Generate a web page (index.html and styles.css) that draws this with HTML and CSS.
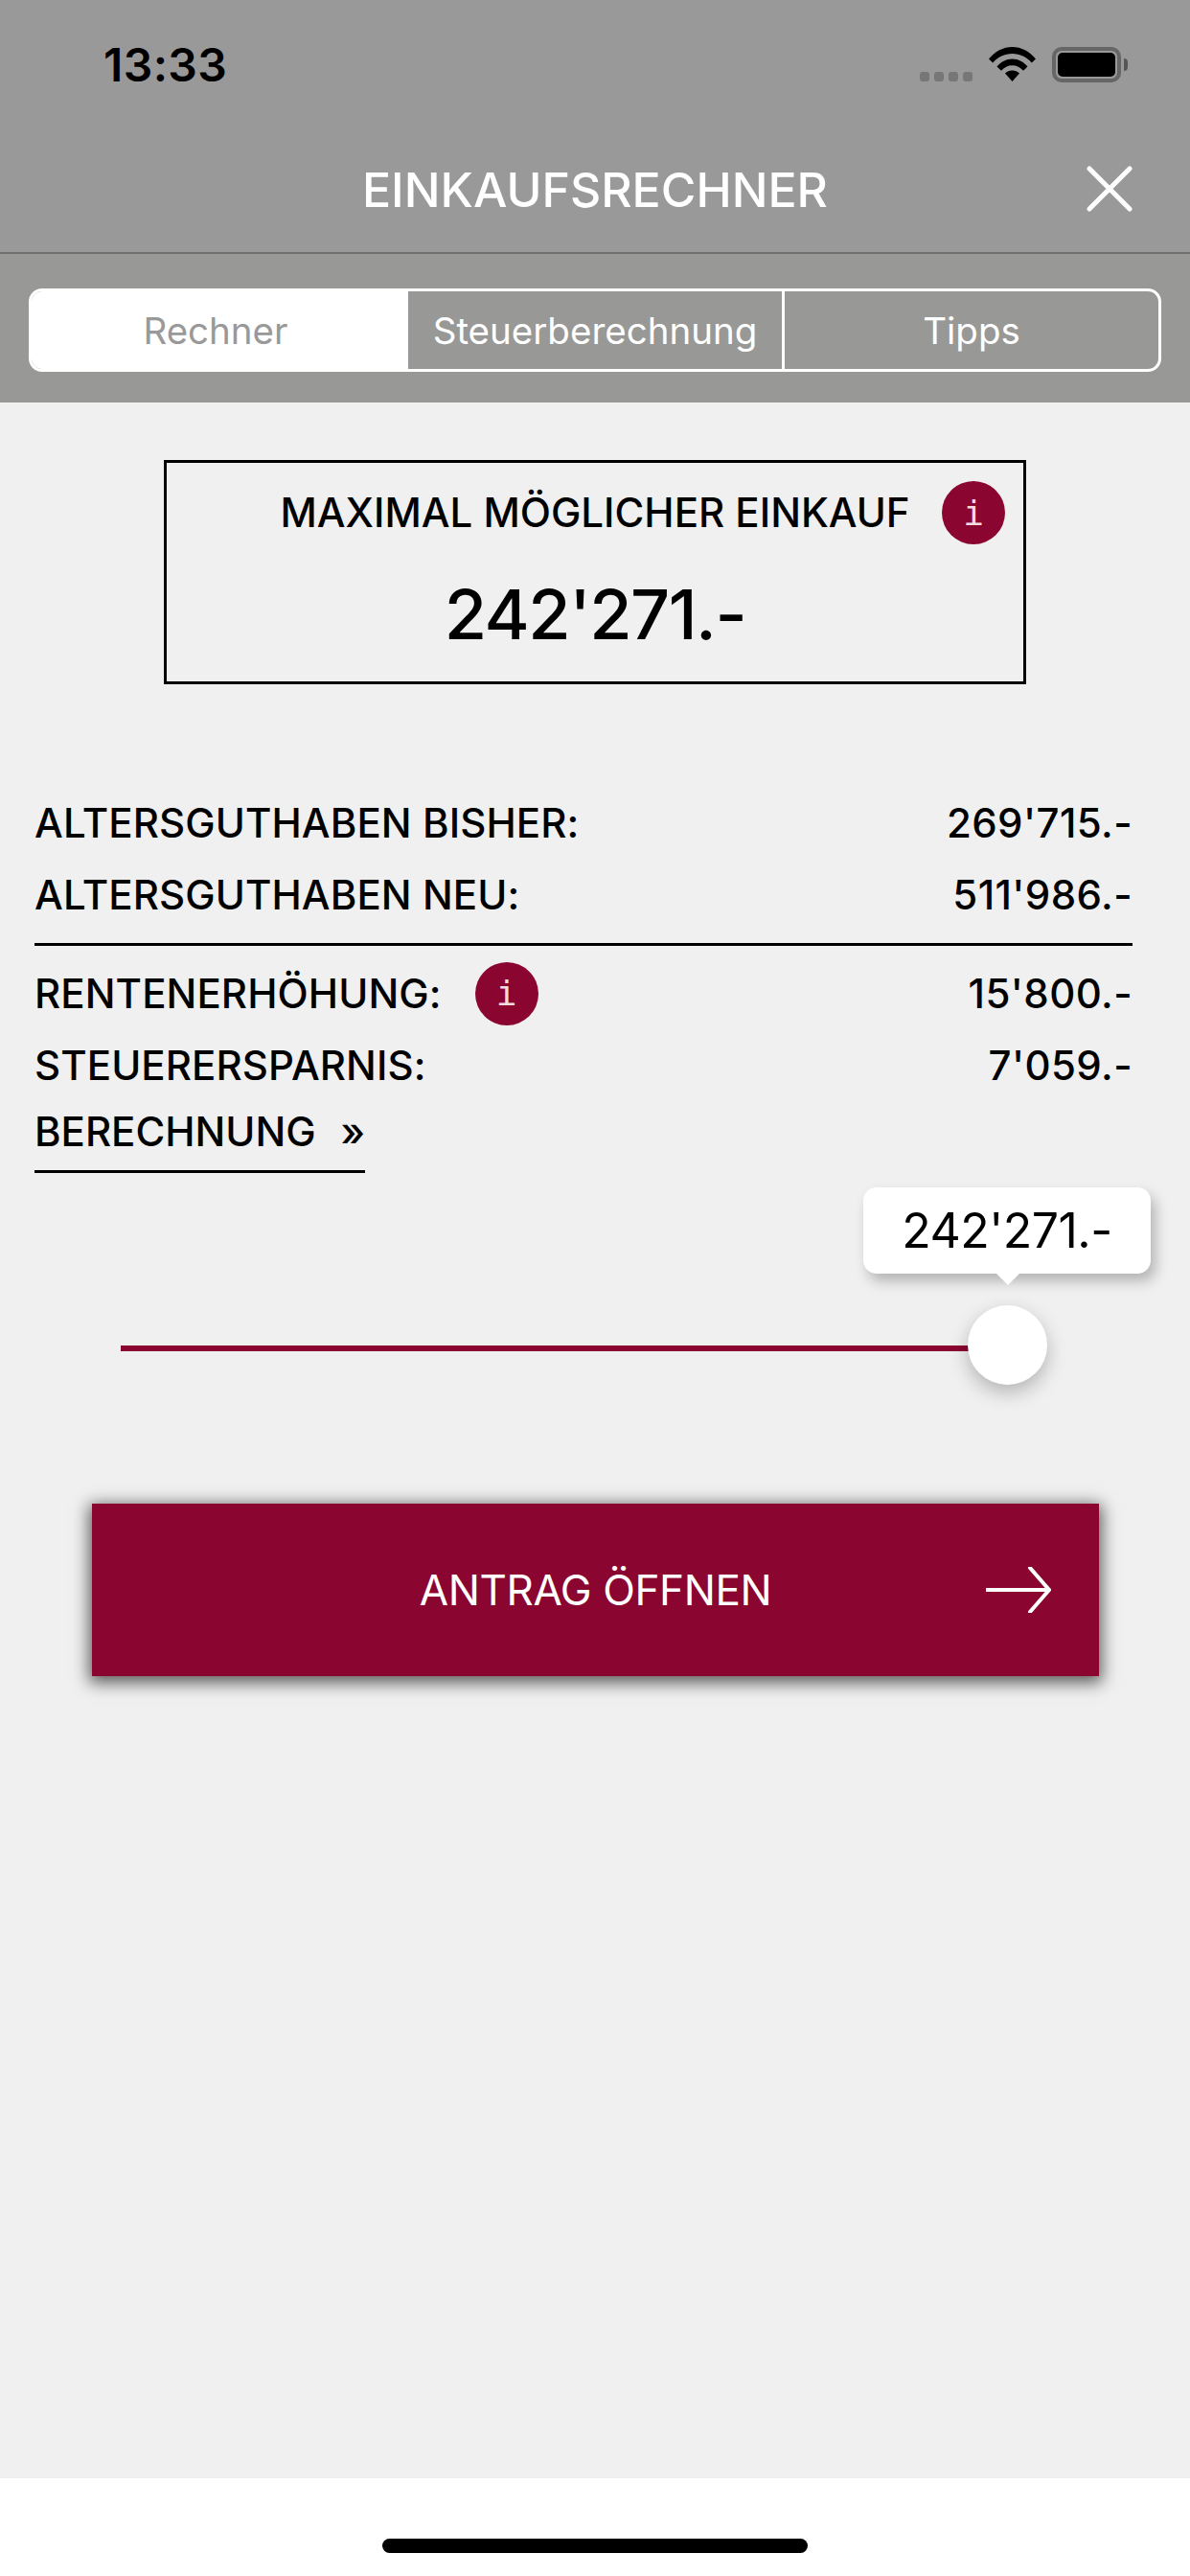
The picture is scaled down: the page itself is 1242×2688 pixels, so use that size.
FILE: index.html
```html
<!DOCTYPE html>
<html lang="de">
<head>
<meta charset="utf-8">
<title>Einkaufsrechner</title>
<link rel="stylesheet" href="styles.css">
</head>
<body>
<div class="screen">
  <header class="top">
    <div class="status">
      <span class="time">13:33</span>
      <div class="status-icons">
        <div class="signal"><i></i><i></i><i></i><i></i></div>
        <svg class="wifi" width="49" height="36" viewBox="0 0 49 36"><path d="M0 12.500C6.500 4.700 15 0 24.500 0S42.500 4.700 49 12.500L44.800 16.500C39.500 10.500 32.500 7 24.500 7S9.500 10.500 4.200 16.500Z"/><path d="M8.500 20.500C12.500 15.500 18.200 12.500 24.500 12.500S36.500 15.500 40.500 20.500L36 24.800C33 21.200 29 19.200 24.500 19.200S16 21.200 13 24.800Z"/><path d="M17 27.500C19 25.500 21.500 24.400 24.500 24.400S30 25.500 32 27.500L24.500 36Z"/></svg>
        <div class="battery"><div class="battery-fill"></div></div>
        <div class="battery-nub"></div>
      </div>
    </div>
    <div class="nav">
      <h1 class="nav-title">EINKAUFSRECHNER</h1>
      <svg class="close" width="48" height="48" viewBox="0 0 48 48"><path d="M3 3L45 45M45 3L3 45"/></svg>
    </div>
  </header>
  <div class="tabbar">
    <div class="tabs">
      <div class="tab tab-active">Rechner</div>
      <div class="tab">Steuerberechnung</div>
      <div class="tab">Tipps</div>
    </div>
  </div>
  <main class="content">
    <section class="maxbox">
      <div class="maxbox-title">MAXIMAL MÖGLICHER EINKAUF</div>
      <span class="info info-box">i</span>
      <div class="maxbox-value">242'271.-</div>
    </section>
    <section class="rows">
      <div class="row"><span>ALTERSGUTHABEN BISHER:</span><span class="amount">269'715.-</span></div>
      <div class="row row-2"><span>ALTERSGUTHABEN NEU:</span><span class="amount">511'986.-</span></div>
      <div class="row row-3"><span class="label-info">RENTENERHÖHUNG:<span class="info">i</span></span><span class="amount">15'800.-</span></div>
      <div class="row row-4"><span>STEUERERSPARNIS:</span><span class="amount">7'059.-</span></div>
      <div class="calc-link"><span>BERECHNUNG</span><span>»</span></div>
    </section>
    <section class="slider">
      <div class="track"></div>
      <div class="thumb"></div>
      <div class="bubble">242'271.-</div>
    </section>
    <button class="cta">
      <span>ANTRAG ÖFFNEN</span>
      <svg class="cta-arrow" width="68" height="48" viewBox="0 0 68 48"><path d="M0 24H66M46 1L66 24L46 47"/></svg>
    </button>
  </main>
  <footer class="home"><div class="home-bar"></div></footer>
</div>
</body>
</html>
```
FILE: styles.css
```css
* { box-sizing: border-box; }
html, body { margin: 0; padding: 0; }
body { font-family: Inter, "Liberation Sans", sans-serif; color: #000; background: #fff; }
.screen { width: 1242px; height: 2688px; display: flex; flex-direction: column; overflow: hidden; }

.top { background: #999999; height: 265px; border-bottom: 2px solid #6f6f6f; flex: none; }
.status { height: 132px; display: flex; justify-content: space-between; align-items: flex-start; padding: 42px 65px 0 108px; }
.time { font-size: 48px; line-height: 52px; font-weight: 600; letter-spacing: 0.4px; }
.status-icons { display: flex; align-items: flex-start; padding-top: 7px; }
.signal { display: flex; gap: 5px; margin: 26px 17px 0 0; }
.signal i { display: block; width: 10px; height: 10px; border-radius: 3px; background: #777; }
.wifi { fill: #000; margin-right: 17px; }
.battery { width: 72px; height: 37px; border: 4px solid #666; border-radius: 10px; padding: 2px; }
.battery-fill { width: 100%; height: 100%; background: #000; border-radius: 5px; }
.battery-nub { width: 4px; height: 13px; margin: 12px 0 0 3px; background: #555; border-radius: 0 6px 6px 0; }

.nav { position: relative; display: flex; justify-content: center; align-items: flex-start; }
.nav-title { margin: 0; font-size: 50px; line-height: 58px; font-weight: 500; color: #fff; padding-top: 37px; }
.close { position: absolute; left: 1134px; top: 41px; fill: none; stroke: #fff; stroke-width: 5; stroke-linecap: round; }

.tabbar { background: #989896; height: 155px; padding: 36px 30px 0; flex: none; }
.tabs { display: flex; height: 87px; border: 3px solid #fff; border-radius: 14px; overflow: hidden; }
.tab { flex: 1; display: flex; align-items: center; justify-content: center; font-size: 38.5px; color: #fff; border-left: 3px solid #fff; }
.tab-active { background: #fff; color: #999; border-left: 0; flex: none; width: 390px; padding-right: 6px; }

.content { flex: 1; background: #f0f0f0; display: flex; flex-direction: column; padding-top: 60px; }

.maxbox { position: relative; width: 900px; height: 234px; margin-left: 171px; border: 3px solid #000; text-align: center; padding-top: 27px; }
.maxbox-title { font-size: 42px; line-height: 50px; font-weight: 500; }
.maxbox-value { font-size: 72px; line-height: 88px; font-weight: 500; margin-top: 37px; letter-spacing: -1.5px; }
.info { display: inline-flex; width: 66px; height: 66px; border-radius: 50%; background: #8a0530; color: #f3d9e0; align-items: center; justify-content: center; font-family: "DejaVu Sans Mono", monospace; font-size: 36px; font-weight: 400; letter-spacing: 0; }
.info-box { position: absolute; left: 809px; top: 19px; }

.rows { padding: 0 60px 0 36px; margin-top: 120px; display: flex; flex-direction: column; }
.row { display: flex; justify-content: space-between; align-items: center; font-size: 42px; line-height: 50px; font-weight: 500; letter-spacing: 0.1px; }
.amount { letter-spacing: 0.4px; }
.row-2 { margin-top: 25px; padding-bottom: 25px; border-bottom: 3px solid #000; }
.row-3 { margin-top: 25px; }
.row-4 { margin-top: 25px; }
.label-info { display: inline-flex; align-items: center; gap: 35px; height: 50px; }
.calc-link { width: 345px; margin-top: 19px; padding-bottom: 15px; border-bottom: 3px solid #000; display: flex; justify-content: space-between; font-size: 42px; line-height: 50px; font-weight: 500; }

.slider { position: relative; height: 210px; margin-top: 15px; padding: 0 0 0 126px; flex: none; }
.track { width: 890px; height: 6px; margin-top: 165px; background: #8a0530; }
.thumb { position: absolute; left: 1010px; top: 123px; width: 83px; height: 83px; border-radius: 50%; background: #fff; box-shadow: 0 8px 20px rgba(0,0,0,0.25); }
.bubble { position: absolute; left: 901px; top: 0; width: 300px; height: 90px; border-radius: 14px; background: #fff; font-size: 50px; letter-spacing: -0.5px; display: flex; align-items: center; justify-content: center; box-shadow: 5px 8px 14px rgba(0,0,0,0.25); }
.bubble::after { content: ""; position: absolute; left: 139px; bottom: -12px; width: 24px; height: 12px; background: #fff; clip-path: polygon(0 0, 100% 0, 50% 100%); }

.cta { position: relative; margin: 120px 0 0 96px; width: 1051px; height: 180px; flex: none; border: 0; background: #8a0530; color: #fff; font-family: inherit; font-size: 44px; letter-spacing: -0.4px; font-weight: 400; display: flex; align-items: center; justify-content: center; padding: 0; box-shadow: 0 4px 16px 3px rgba(0,0,0,0.62); }
.cta-arrow { position: absolute; left: 933px; top: 66px; fill: none; stroke: #fff; stroke-width: 4; stroke-linecap: round; }

.home { background: #fff; height: 102px; flex: none; display: flex; justify-content: center; padding-top: 63px; }
.home-bar { width: 444px; height: 15px; background: #000; border-radius: 8px; }
```
